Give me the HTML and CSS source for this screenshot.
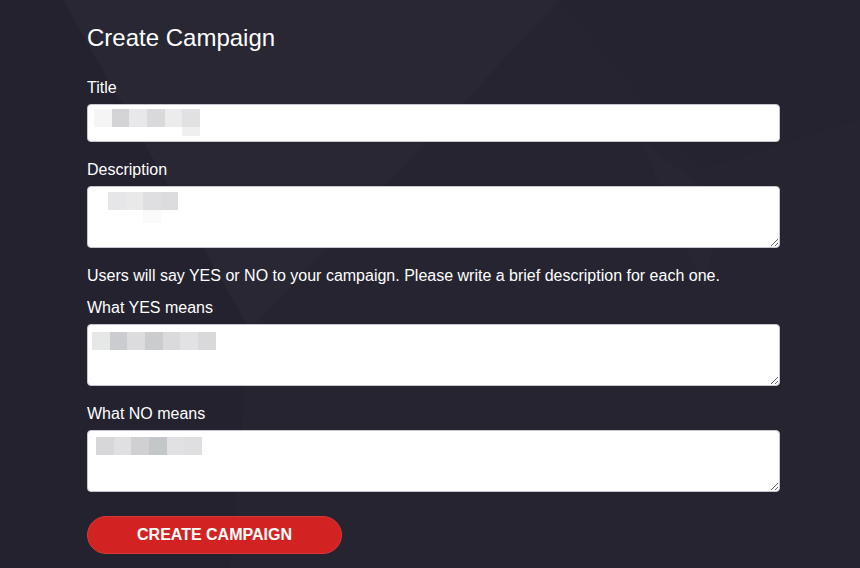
FILE: index.html
```html
<!DOCTYPE html>
<html lang="en">
<head>
<meta charset="utf-8">
<title>Create Campaign</title>
<link rel="stylesheet" href="styles.css">
</head>
<body>
<svg class="bg-shapes" width="860" height="568" viewBox="0 0 860 568" aria-hidden="true">
  <polygon points="63,0 560,0 250,330" fill="rgba(255,255,255,0.016)"/>
  <polygon points="0,0 63,0 250,330 230,568 0,568" fill="rgba(0,0,0,0.03)"/>
  <polygon points="560,0 860,0 860,120 700,170" fill="rgba(0,0,0,0.012)"/>
  <polygon points="640,140 720,200 705,290" fill="rgba(255,255,255,0.01)"/>
</svg>
<main class="page">
  <h1 class="title">Create Campaign</h1>
  <form class="form">
    <div class="field">
      <label class="label" for="title">Title</label>
      <div class="control">
        <input class="input" id="title" type="text">
        <div class="mosaic mosaic-title" aria-hidden="true">
          <div class="mrow">
            <span class="px" style="--w:18px;--c:#f5f5f6"></span><span class="px" style="--w:17px;--c:#d4d4d6"></span><span class="px" style="--w:18px;--c:#e8e8ea"></span><span class="px" style="--w:18px;--c:#d9d9db"></span><span class="px" style="--w:17px;--c:#ececed"></span><span class="px" style="--w:18px;--c:#e1e1e3"></span>
          </div>
          <div class="mrow mrow-sub" style="--off:88px">
            <span class="px px-short" style="--w:18px;--c:#efeff0;--h:9px"></span>
          </div>
        </div>
      </div>
    </div>

    <div class="field">
      <label class="label" for="desc">Description</label>
      <div class="control">
        <textarea class="textarea" id="desc"></textarea>
        <div class="mosaic mosaic-desc" aria-hidden="true">
          <div class="mrow">
            <span class="px" style="--w:18px;--c:#e6e6e8"></span><span class="px" style="--w:17px;--c:#e9e9ea"></span><span class="px" style="--w:18px;--c:#dfdfe1"></span><span class="px" style="--w:17px;--c:#dcdcde"></span>
          </div>
          <div class="mrow mrow-sub" style="--off:35px">
            <span class="px px-short" style="--w:18px;--c:#fafafa;--h:13px"></span>
          </div>
        </div>
      </div>
    </div>

    <p class="help">Users will say YES or NO to your campaign. Please write a brief description for each one.</p>

    <div class="field">
      <label class="label" for="yes">What YES means</label>
      <div class="control">
        <textarea class="textarea" id="yes"></textarea>
        <div class="mosaic mosaic-yes" aria-hidden="true">
          <div class="mrow">
            <span class="px" style="--w:18px;--c:#e6e7e7"></span><span class="px" style="--w:17px;--c:#cbcccf"></span><span class="px" style="--w:18px;--c:#dcdcde"></span><span class="px" style="--w:18px;--c:#cbcccd"></span><span class="px" style="--w:17px;--c:#dadadc"></span><span class="px" style="--w:18px;--c:#e2e2e4"></span><span class="px" style="--w:18px;--c:#d9d9db"></span>
          </div>
        </div>
      </div>
    </div>

    <div class="field">
      <label class="label" for="no">What NO means</label>
      <div class="control">
        <textarea class="textarea" id="no"></textarea>
        <div class="mosaic mosaic-no" aria-hidden="true">
          <div class="mrow">
            <span class="px" style="--w:18px;--c:#d7d7d9"></span><span class="px" style="--w:17px;--c:#e0e0e2"></span><span class="px" style="--w:18px;--c:#d0d0d2"></span><span class="px" style="--w:18px;--c:#c4c7ca"></span><span class="px" style="--w:17px;--c:#e1e1e3"></span><span class="px" style="--w:18px;--c:#dfdfe1"></span>
          </div>
        </div>
      </div>
    </div>

    <button class="btn" type="button">CREATE CAMPAIGN</button>
  </form>
</main>
</body>
</html>
```

FILE: styles.css
```css
* { box-sizing: border-box; }

html, body {
  margin: 0;
  padding: 0;
  width: 860px;
  height: 568px;
  overflow: hidden;
}

body {
  position: relative;
  background: #252430;
  color: #ffffff;
  font-family: "Liberation Sans", Arial, sans-serif;
  font-size: 16px;
}

.bg-shapes {
  position: absolute;
  left: 0;
  top: 0;
  z-index: 0;
  pointer-events: none;
}

.page {
  position: relative;
  z-index: 1;
  padding: 24px 0 0 87px;
  width: 780px;
}

.title {
  margin: 0 0 26px 0;
  font-size: 24px;
  font-weight: normal;
  line-height: 28px;
  color: #ffffff;
}

.form {
  display: flex;
  flex-direction: column;
  width: 693px;
}

.field {
  display: flex;
  flex-direction: column;
  margin-bottom: 18px;
}

.label {
  display: block;
  font-size: 16px;
  line-height: 18px;
  padding-top: 1px;
  margin-bottom: 7px;
  color: #ffffff;
}

.control {
  position: relative;
}

.input,
.textarea {
  display: block;
  width: 693px;
  margin: 0;
  border: 1px solid #c4c5ce;
  border-radius: 4px;
  background: #ffffff;
  font-family: "Liberation Sans", Arial, sans-serif;
  font-size: 16px;
  outline: none;
  padding: 6px 8px;
}

.input { height: 38px; }

.textarea {
  height: 62px;
  resize: vertical;
}

.mosaic {
  position: absolute;
  display: flex;
  flex-direction: column;
  pointer-events: none;
}

.mosaic-title { left: 7px; top: 5px; }
.mosaic-desc { left: 21px; top: 6px; }
.mosaic-yes { left: 5px; top: 8px; }
.mosaic-no { left: 9px; top: 7px; }

.mrow {
  display: flex;
}

.mrow-sub {
  padding-left: var(--off);
}

.px {
  display: block;
  width: var(--w);
  height: 18px;
  background: var(--c);
}

.px-short {
  height: var(--h);
}

.help {
  margin: 1px 0 13px 0;
  font-size: 16px;
  line-height: 18px;
  color: #ffffff;
}

.btn {
  margin-top: 6px;
  width: 255px;
  height: 38px;
  border: 1px solid #d73838;
  border-radius: 19px;
  background: #d22222;
  color: #ffffff;
  font-family: "Liberation Sans", Arial, sans-serif;
  font-size: 16px;
  font-weight: bold;
  cursor: pointer;
  padding: 0;
}
```
